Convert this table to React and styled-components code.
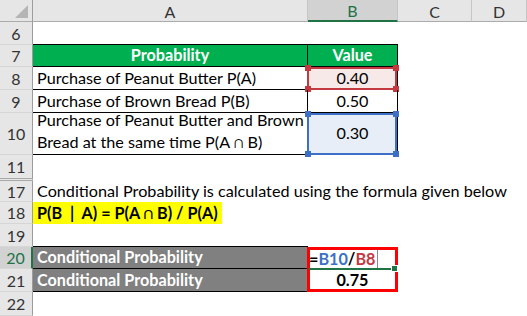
import React from 'react';
import styled, { createGlobalStyle, css } from 'styled-components';

const Global = createGlobalStyle`
  html, body { margin: 0; padding: 0; background: #fff; }
  body {
    width: 527px; height: 316px; overflow: hidden;
    font-family: Lato, "Liberation Sans", sans-serif;
  }
`;

const GREEN = '#217346';

const Sheet = styled.div`
  display: grid;
  grid-template-columns: 33px 275px 90px 74px 1fr;
  grid-template-rows: 22px 23px 22px 23px 23px 42px 26px 21px 22px 23px 22px 23px 24px;
  width: 527px;
  height: 316px;
  font-size: 16.2px;
  color: #000;
`;

const Corner = styled.div`
  position: relative;
  background: #e6e6e6;
  border-right: 1px solid #9c9c9c;
  border-bottom: 1px solid #ababab;
  box-sizing: border-box;
`;

const Triangle = styled.div`
  position: absolute;
  right: 4px;
  bottom: 3px;
  width: 0;
  height: 0;
  border-left: 13px solid transparent;
  border-bottom: 13px solid #b5b5b5;
`;

const ColHead = styled.div`
  box-sizing: border-box;
  display: flex;
  align-items: center;
  justify-content: center;
  background: ${p => (p.$selected ? '#d2d2d2' : '#e6e6e6')};
  color: ${p => (p.$selected ? GREEN : '#333')};
  border-right: 1px solid #c6c6c6;
  border-bottom: ${p => (p.$selected ? `2px solid ${GREEN}` : '1px solid #ababab')};
  font-size: 16px;
  padding-top: 1px;
`;

const RowHead = styled.div`
  box-sizing: border-box;
  display: flex;
  align-items: center;
  justify-content: center;
  background: ${p => (p.$selected ? '#d2d2d2' : '#e6e6e6')};
  color: ${p => (p.$selected ? GREEN : '#333')};
  border-right: ${p => (p.$selected ? `2px solid ${GREEN}` : '1px solid #9c9c9c')};
  border-bottom: ${p => (p.$hiddenBelow ? '3px double #a8a8a8' : '1px solid #d6d6d6')};
  font-size: 16px;
`;

const Cell = styled.div`
  box-sizing: border-box;
  position: relative;
  display: flex;
  align-items: ${p => (p.$middle ? 'center' : 'flex-end')};
  justify-content: ${p => (p.$center ? 'center' : 'flex-start')};
  padding: 0 4px 1px;
  white-space: nowrap;
  line-height: 20px;
  background: ${p => p.$bg || 'transparent'};
  color: ${p => p.$color || '#000'};
  font-weight: ${p => (p.$bold ? 700 : 400)};
  ${p => p.$span && css`grid-column: span ${p.$span};`}
  ${p => p.$flush && css`padding: 0;`}
  ${p => p.$bb && css`border-bottom: 1px solid #000;`}
  ${p => p.$br && css`border-right: 1px solid #000;`}
`;

const Wrapped = styled.div`
  line-height: 22px;
  white-space: nowrap;
`;

const RefBox = styled.div`
  position: absolute;
  inset: 0 0 -1px -1px;
  border: 2px solid ${p => p.$color};
  background: ${p => p.$fill};
  z-index: 0;
  pointer-events: none;
`;

const Handle = styled.span`
  position: absolute;
  width: 6px;
  height: 6px;
  background: ${p => p.$color};
  ${p => (p.$top ? 'top: -4px;' : 'bottom: -4px;')}
  ${p => (p.$left ? 'left: -4px;' : 'right: -4px;')}
`;

const CellText = styled.span`
  position: relative;
  z-index: 1;
`;

const Highlight = styled.span`
  display: flex;
  align-items: flex-end;
  height: 100%;
  box-sizing: border-box;
  padding: 0 4px 1px;
  background: #ffff00;
  font-weight: 700;
`;

const FormulaBox = styled.div`
  grid-row: span 2;
  box-sizing: border-box;
  margin-left: -1px;
  border: 3px solid #ff0000;
  display: flex;
  flex-direction: column;
  position: relative;
  z-index: 2;
  background: #fff;
`;

const EditLine = styled.div`
  position: relative;
  height: 19px;
  display: flex;
  align-items: flex-end;
  font-weight: 700;
  line-height: 18px;
  border-bottom: 2px solid ${GREEN};
  margin-left: -1px;
  margin-right: -3px;
`;

const Ref = styled.span`
  color: ${p => p.$color};
`;

const Caret = styled.span`
  display: inline-block;
  width: 1px;
  height: 18px;
  margin-left: 2px;
  background: #8a8a8a;
  align-self: flex-start;
`;

const FillHandle = styled.span`
  position: absolute;
  right: 0;
  bottom: -4px;
  width: 5px;
  height: 5px;
  background: ${GREEN};
  border: 1px solid #fff;
`;

const Result = styled.div`
  flex: 1;
  display: flex;
  align-items: flex-end;
  justify-content: center;
  font-weight: 700;
  line-height: 20px;
`;

const Corners = ({ color }) => (
  <>
    <Handle $color={color} $top $left />
    <Handle $color={color} $top />
    <Handle $color={color} $left />
    <Handle $color={color} />
  </>
);

const Empty = () => (
  <>
    <Cell />
    <Cell />
  </>
);

export default function App() {
  const red = '#c4383f';
  const blue = '#3b70c6';
  return (
    <>
      <Global />
      <Sheet>
        <Corner><Triangle /></Corner>
        <ColHead>A</ColHead>
        <ColHead $selected>B</ColHead>
        <ColHead>C</ColHead>
        <ColHead>D</ColHead>

        <RowHead>6</RowHead>
        <Cell $bb /><Cell $bb /><Empty />

        <RowHead>7</RowHead>
        <Cell $bg="#00b050" $color="#fff" $bold $center $bb $br>Probability</Cell>
        <Cell $bg="#00b050" $color="#fff" $bold $center $bb $br>Value</Cell>
        <Empty />

        <RowHead>8</RowHead>
        <Cell $bb $br>Purchase of Peanut Butter P(A)</Cell>
        <Cell $center $bb $br>
          <RefBox $color={red} $fill="#f8e9e9"><Corners color={red} /></RefBox>
          <CellText>0.40</CellText>
        </Cell>
        <Empty />

        <RowHead>9</RowHead>
        <Cell $bb $br>Purchase of Brown Bread P(B)</Cell>
        <Cell $center $bb $br>0.50</Cell>
        <Empty />

        <RowHead>10</RowHead>
        <Cell $bb $br>
          <Wrapped>Purchase of Peanut Butter and Brown<br />Bread at the same time P(A ∩ B)</Wrapped>
        </Cell>
        <Cell $center $middle $bb $br>
          <RefBox $color={blue} $fill="#e8eef8"><Corners color={blue} /></RefBox>
          <CellText>0.30</CellText>
        </Cell>
        <Empty />

        <RowHead $hiddenBelow>11</RowHead>
        <Cell /><Cell /><Empty />

        <RowHead>17</RowHead>
        <Cell $span={4}>Conditional Probability is calculated using the formula given below</Cell>

        <RowHead>18</RowHead>
        <Cell $span={4} $flush>
          <Highlight>P(B &nbsp;|&nbsp; A) = P(A ∩ B) / P(A)</Highlight>
        </Cell>

        <RowHead>19</RowHead>
        <Cell $bb /><Cell /><Empty />

        <RowHead $selected>20</RowHead>
        <Cell $bg="#808080" $color="#fff" $bold $bb>Conditional Probability</Cell>
        <FormulaBox>
          <EditLine>
            =<Ref $color={blue}>B10</Ref>/<Ref $color={red}>B8</Ref><Caret />
            <FillHandle />
          </EditLine>
          <Result>0.75</Result>
        </FormulaBox>
        <Empty />

        <RowHead>21</RowHead>
        <Cell $bg="#808080" $color="#fff" $bold $bb>Conditional Probability</Cell>
        <Empty />

        <RowHead>22</RowHead>
        <Cell /><Cell /><Empty />
      </Sheet>
    </>
  );
}
